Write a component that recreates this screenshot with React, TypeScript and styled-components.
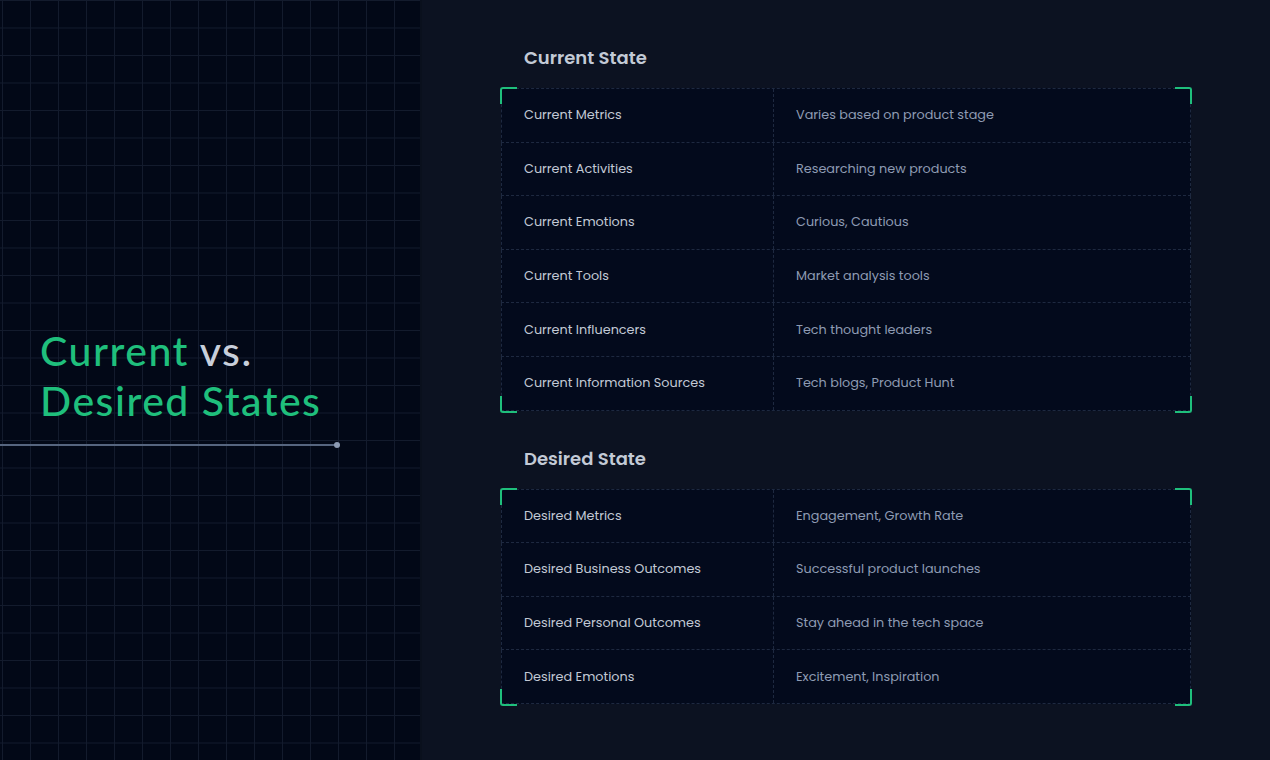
import React from "react";
import styled, { createGlobalStyle } from "styled-components";

const G = createGlobalStyle`
  html,body{margin:0;padding:0;background:#0c1221;}
  *{box-sizing:border-box;}
`;
const Page = styled.div`
  display:flex;width:1270px;height:760px;overflow:hidden;
  font-family:Poppins,Inter,"Noto Sans",sans-serif;
`;
const Left = styled.div`
  width:422px;flex:none;position:relative;
  background-color:#020817;
  background-image:linear-gradient(#131b2d 1px,transparent 1px),linear-gradient(90deg,#131b2d 1px,transparent 1px);
  background-size:28px 27.5px;background-position:2px 0;
  border-right:2px solid #0a101d;
  display:flex;flex-direction:column;justify-content:center;padding-top:12px;
`;
const Title = styled.h1`
  margin:0 0 0 40px;font-family:"Lato","Noto Sans",sans-serif;font-weight:500;
  font-size:41px;line-height:50px;color:#1fbf7c;letter-spacing:1.5px;
  span{color:#c8cfdb;}
`;
const Rule = styled.div`
  margin-top:18px;width:338px;height:2px;background:#56657f;position:relative;
  &:after{content:"";position:absolute;right:-2px;top:-2px;width:6px;height:6px;border-radius:50%;background:#8c9ab3;}
`;
const Right = styled.div`
  flex:1;background:#0c1221;padding:46px 0 0 79px;display:flex;flex-direction:column;
`;
const H2 = styled.h2`
  margin:0 0 18px 23px;font-size:18px;font-weight:600;color:#c3cad6;line-height:24px;
`;
const Table = styled.div`
  position:relative;width:690px;background:#030a1c;margin-bottom:36px;
  border-top:1px dashed #1e2940;
`;
const Corner = styled.i<{ pos: string }>`
  position:absolute;width:17px;height:17px;border:0 solid #1fbf7c;
  ${(p) => (p.pos.includes("t") ? "top:-2px;border-top-width:2px;" : "bottom:-2px;border-bottom-width:2px;")}
  ${(p) => (p.pos.includes("l") ? "left:-1px;border-left-width:2px;" : "right:-1px;border-right-width:2px;")}
  ${(p) => p.pos === "tl" ? "border-top-left-radius:3px;" : p.pos === "tr" ? "border-top-right-radius:3px;" : p.pos === "bl" ? "border-bottom-left-radius:3px;" : "border-bottom-right-radius:3px;"}
`;
const Row = styled.div`
  display:grid;grid-template-columns:271px 1fr;height:53.6px;
  border-bottom:1px dashed #1e2940;border-left:1px dashed #1e2940;border-right:1px dashed #1e2940;
`;
const Cell = styled.div<{ v?: boolean }>`
  display:flex;align-items:center;padding-left:${(p) => (p.v ? 22 : 22)}px;font-size:12.8px;
  color:${(p) => (p.v ? "#8e9bb3" : "#c2c9d5")};
  ${(p) => (p.v ? "border-left:1px dashed #1e2940;" : "")}
`;

const cur = [
  ["Current Metrics", "Varies based on product stage"],
  ["Current Activities", "Researching new products"],
  ["Current Emotions", "Curious, Cautious"],
  ["Current Tools", "Market analysis tools"],
  ["Current Influencers", "Tech thought leaders"],
  ["Current Information Sources", "Tech blogs, Product Hunt"],
];
const des = [
  ["Desired Metrics", "Engagement, Growth Rate"],
  ["Desired Business Outcomes", "Successful product launches"],
  ["Desired Personal Outcomes", "Stay ahead in the tech space"],
  ["Desired Emotions", "Excitement, Inspiration"],
];

const T = ({ rows }: { rows: string[][] }) => (
  <Table>
    {["tl", "tr", "bl", "br"].map((p) => <Corner key={p} pos={p} />)}
    {rows.map(([a, b]) => (
      <Row key={a}><Cell>{a}</Cell><Cell v>{b}</Cell></Row>
    ))}
  </Table>
);

export default function App() {
  return (
    <Page>
      <G />
      <Left>
        <Title>Current <span>vs.</span><br />Desired States</Title>
        <Rule />
      </Left>
      <Right>
        <H2>Current State</H2>
        <T rows={cur} />
        <H2>Desired State</H2>
        <T rows={des} />
      </Right>
    </Page>
  );
}
